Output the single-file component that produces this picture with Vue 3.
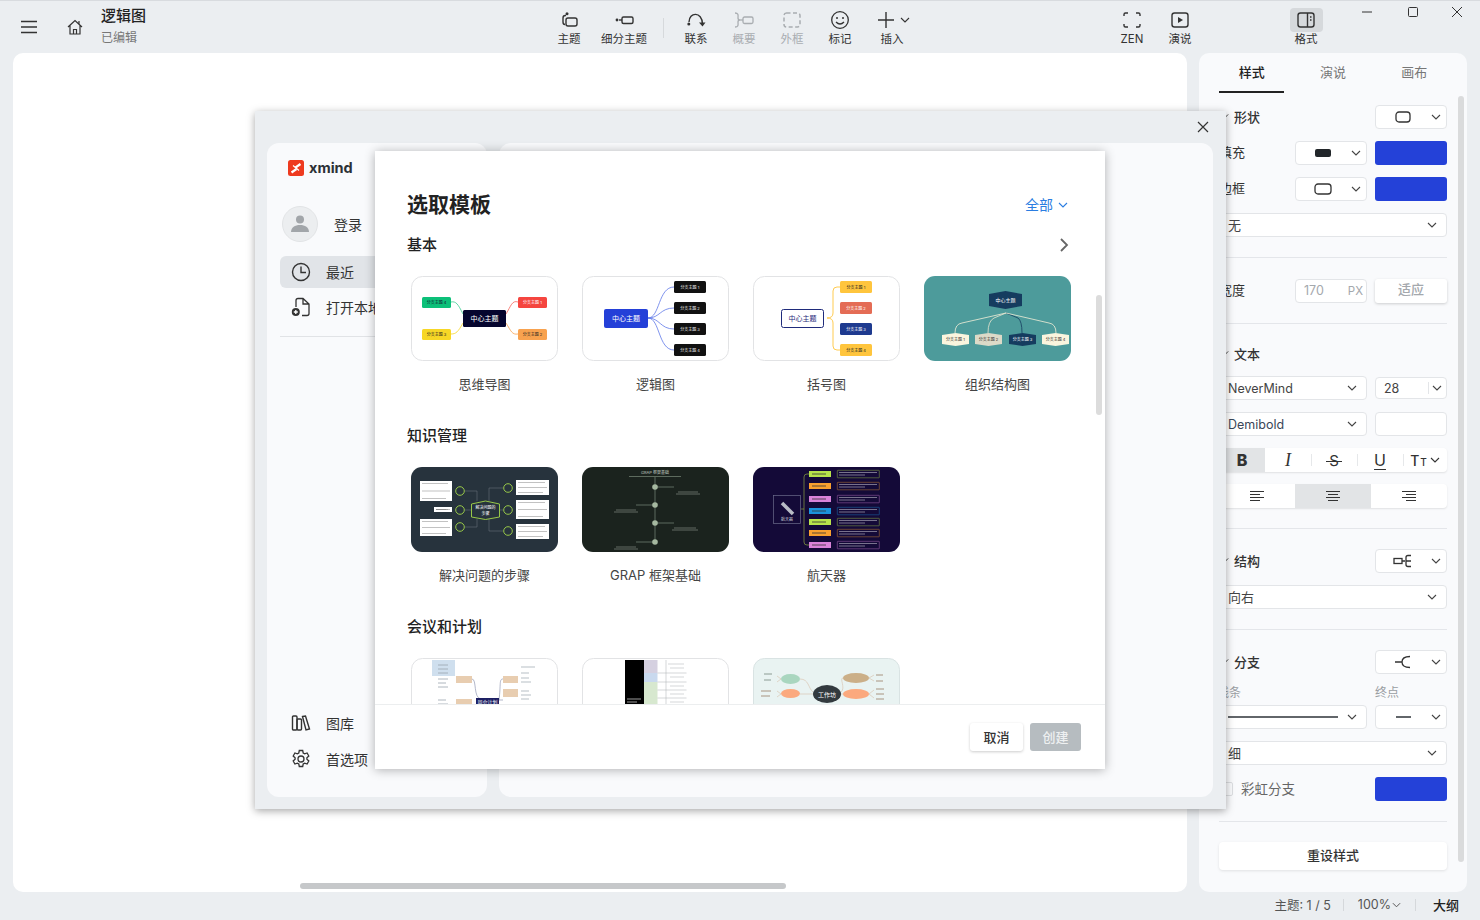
<script setup>
import { h } from 'vue'

// small chevron used by every dropdown
const Chev = () =>
  h('svg', { class: 'chev', width: 10, height: 6, viewBox: '0 0 10 6' }, [
    h('path', { d: 'M1 1l4 4 4-4', fill: 'none', stroke: 'currentColor', 'stroke-width': 1.1 })
  ])

const curves1 = [
  { d: 'M95 38C100 30 101 24 107 26', c: '#f5635c' },
  { d: 'M95 47C100 55 101 59 107 58', c: '#f8a24f' },
  { d: 'M52 38C47 28 45 25 40 26', c: '#3ccb92' },
  { d: 'M52 47C47 56 45 58 40 58', c: '#f7d726' }
]
const nodes1 = [
  { x: 107, y: 21, w: 29, h: 11, f: '#f5453f', t: '分支主题 1', c: '#fff' },
  { x: 107, y: 53, w: 29, h: 11, f: '#f8a24f', t: '分支主题 2', c: '#222' },
  { x: 11, y: 21, w: 29, h: 11, f: '#0cc079', t: '分支主题 4', c: '#123' },
  { x: 11, y: 53, w: 29, h: 11, f: '#f7d726', t: '分支主题 3', c: '#222' }
]
const rowY = [5, 26, 47, 68]
const braceColors = [
  { f: '#ffc53d', c: '#222' },
  { f: '#e46c55', c: '#fff' },
  { f: '#1e3a8f', c: '#fff' },
  { f: '#ffc53d', c: '#222' }
]
const orgKids = [
  { x: 18, f: '#faf5de', c: '#333', l: '#f2efd8', d: 'M82 37L38 47Q31 48 31 57', t: '分支主题 1' },
  { x: 51, f: '#dcdac8', c: '#333', l: '#e8e6d0', d: 'M82 37L70 42Q64 45 64 57', t: '分支主题 2' },
  { x: 85, f: '#153c5f', c: '#fff', l: '#153c5f', d: 'M82 37L94 42Q98 45 98 57', t: '分支主题 3' },
  { x: 118, f: '#faf5de', c: '#333', l: '#f2efd8', d: 'M82 37L125 47Q132 48 132 57', t: '分支主题 4' }
]
const problemBoxes = [
  [9, 14, 32, 20], [23, 40, 18, 5], [9, 52, 32, 17],
  [105, 13, 33, 15], [105, 33, 33, 19], [105, 57, 33, 15]
]
const problemDots = [[49, 24], [49, 43], [49, 60], [97, 21], [97, 43], [97, 64]]
const problemLines = [
  'M54 24H66V34', 'M54 43H60', 'M54 60H66V52',
  'M92 21H78V34', 'M92 43H89', 'M92 64H78V52'
]
const grapRows = [
  { y: 20, x2: 92, tx: 96, w: 20 },
  { y: 38, x2: 54, tx: 34, w: 20 },
  { y: 56, x2: 92, tx: 92, w: 22 },
  { y: 75, x2: 54, tx: 34, w: 20 }
]
const rocket = [
  { y: 4, c: '#b7e34b' }, { y: 16, c: '#f8a02f' }, { y: 29, c: '#d983d9' },
  { y: 41, c: '#1b93dc' }, { y: 52, c: '#b7e34b' }, { y: 63, c: '#f8a02f' }, { y: 75, c: '#d983d9' }
]
</script>

<template>
  <div class="app">
    <header class="topbar">
      <button class="icon-btn menu">
        <svg width="16" height="14" viewBox="0 0 16 14"><path d="M0 1.500h16M0 7h16M0 12.500h16" stroke="#333" stroke-width="1.700" /></svg>
      </button>
      <button class="icon-btn home">
        <svg width="18" height="18" viewBox="0 0 18 18" fill="none" stroke="#333" stroke-width="1.200"><path d="M2 9l7-6.500L16 9M4 7.500V16h10V7.500M7.500 16v-4.500h3V16M13 3v3" /></svg>
      </button>
      <div class="doc">
        <div class="doc-title">逻辑图</div>
        <div class="doc-sub">已编辑</div>
      </div>

      <div class="tool w48">
        <svg width="20" height="20" viewBox="0 0 20 20" fill="none" stroke="#333" stroke-width="1.400"><circle cx="8" cy="3.800" r="1.500" fill="#333" stroke="none" /><path d="M7 5.500H6.200Q4 5.500 4 8v4q0 2.500 2 2.500" /><rect x="7" y="8" width="11" height="8" rx="2" /></svg>
        <span>主题</span>
      </div>
      <div class="tool w62">
        <svg width="20" height="20" viewBox="0 0 20 20" fill="none" stroke="#333" stroke-width="1.400"><circle cx="3" cy="10" r="1.400" fill="#333" stroke="none" /><path d="M5 10h3" /><rect x="8" y="7" width="11" height="6.500" rx="1.500" /></svg>
        <span>细分主题</span>
      </div>
      <div class="tool-sep"></div>
      <div class="tool w48 ml1">
        <svg width="20" height="20" viewBox="0 0 20 20" fill="none" stroke="#333" stroke-width="1.400"><circle cx="2.800" cy="14" r="1.500" fill="#333" stroke="none" /><path d="M3 12C3 2 16 1 16.500 14" /><path d="M13 12.500l3.500 4 3-4z" fill="#333" stroke="none" /></svg>
        <span>联系</span>
      </div>
      <div class="tool w48 off">
        <svg width="20" height="20" viewBox="0 0 20 20" fill="none" stroke="#a9adb1" stroke-width="1.300"><path d="M1 3c4 0 3 3 3 5s1 2 2 2c-1 0-2 0-2 2s1 5-3 5" /><path d="M6 10h3" /><rect x="9" y="7" width="10" height="6.500" rx="1.500" /></svg>
        <span>概要</span>
      </div>
      <div class="tool w48 off">
        <svg width="20" height="20" viewBox="0 0 20 20" fill="none" stroke="#a9adb1" stroke-width="1.500"><rect x="2" y="3" width="16" height="14" rx="2.500" stroke-dasharray="4 2.500" /></svg>
        <span>外框</span>
      </div>
      <div class="tool w48">
        <svg width="20" height="20" viewBox="0 0 20 20" fill="none" stroke="#333" stroke-width="1.300"><circle cx="10" cy="10" r="8.300" /><circle cx="7" cy="8" r="1" fill="#333" stroke="none" /><circle cx="13" cy="8" r="1" fill="#333" stroke="none" /><path d="M6 12q4 4 8 0" /></svg>
        <span>标记</span>
      </div>
      <div class="tool w48 ml2">
        <div class="plus">
          <svg width="18" height="18" viewBox="0 0 18 18"><path d="M9 1v16M1 9h16" stroke="#333" stroke-width="1.400" /></svg>
          <Chev />
        </div>
        <span>插入</span>
      </div>
      <div class="tool w48 ml3">
        <svg width="20" height="20" viewBox="0 0 20 20" fill="none" stroke="#333" stroke-width="1.400"><path d="M2 6V4.500Q2 3 3.500 3H6M14 3h2.500Q18 3 18 4.500V6M18 14v1.500Q18 17 16.500 17H14M6 17H3.500Q2 17 2 15.500V14" /></svg>
        <span>ZEN</span>
      </div>
      <div class="tool w48">
        <svg width="20" height="20" viewBox="0 0 20 20" fill="none" stroke="#333" stroke-width="1.400"><rect x="2" y="3" width="16" height="14" rx="2.500" /><path d="M8 7l5 3-5 3z" fill="#333" stroke="none" /></svg>
        <span>演说</span>
      </div>
      <div class="tool w48 ml4 active">
        <div class="active-bg">
          <svg width="20" height="18" viewBox="0 0 20 18" fill="none" stroke="#333" stroke-width="1.400"><rect x="2" y="2" width="16" height="14" rx="2.500" /><path d="M11.500 2v14" /><path d="M14 6h1.500M14 9h1.500" /></svg>
        </div>
        <span>格式</span>
      </div>

      <div class="win">
        <svg class="win-min" width="12" height="12" viewBox="0 0 12 12"><path d="M1 6h10" stroke="#333" /></svg>
        <svg class="win-max" width="12" height="12" viewBox="0 0 12 12"><rect x="1.500" y="1.500" width="9" height="9" rx="1" fill="none" stroke="#333" /></svg>
        <svg class="win-close" width="12" height="12" viewBox="0 0 12 12"><path d="M1 1l10 10M11 1L1 11" stroke="#333" /></svg>
      </div>
    </header>

    <main class="body">
      <section class="canvas">
        <div class="hscroll"></div>
      </section>

      <aside class="panel">
        <div class="tabs">
          <div class="tab on">样式</div>
          <div class="tab">演说</div>
          <div class="tab">画布</div>
        </div>
        <div class="vscroll"></div>

        <div class="row head mt12">
          <span class="lbl"><Chev />形状</span>
          <div class="sel w72">
            <svg width="16" height="12" viewBox="0 0 16 12"><rect x="1" y="1" width="14" height="10" rx="3" fill="none" stroke="#333" stroke-width="1.300" /></svg>
            <Chev />
          </div>
        </div>
        <div class="row mt12">
          <span class="lbl2">填充</span>
          <div class="sel w72 mla">
            <svg width="18" height="10" viewBox="0 0 18 10"><rect x="1" y="1" width="16" height="8" rx="2" fill="#22262a" /></svg>
            <Chev />
          </div>
          <div class="swatch"></div>
        </div>
        <div class="row mt12">
          <span class="lbl2">边框</span>
          <div class="sel w72 mla">
            <svg width="18" height="12" viewBox="0 0 18 12"><rect x="1" y="1" width="16" height="10" rx="3" fill="none" stroke="#333" stroke-width="1.300" /></svg>
            <Chev />
          </div>
          <div class="swatch"></div>
        </div>
        <div class="sel full mt12"><span>无</span><Chev /></div>
        <div class="divider d1"></div>
        <div class="row">
          <span class="lbl2">宽度</span>
          <div class="sel w72 mla px"><em>170</em><i>PX</i></div>
          <div class="fit">适应</div>
        </div>
        <div class="divider d2"></div>

        <div class="row head mt19">
          <span class="lbl"><Chev />文本</span>
        </div>
        <div class="row mt12b">
          <div class="sel grow"><span>NeverMind</span><Chev /></div>
          <div class="sel w72 size"><span>28</span><b></b><Chev /></div>
        </div>
        <div class="row mt12">
          <div class="sel grow"><span class="blue">Demibold</span><Chev /></div>
          <div class="sel w72"></div>
        </div>
        <div class="seg mt12">
          <div class="seg-i seg-on bold">B</div>
          <div class="seg-i ital">I</div>
          <div class="seg-i strike"><span>S</span></div>
          <div class="seg-i under">U</div>
          <div class="seg-i tt">T<small>T</small><Chev /></div>
        </div>
        <div class="seg mt12">
          <div class="seg-a">
            <svg width="16" height="12" viewBox="0 0 16 12"><path d="M1 1.500h14M1 4.500h10M1 7.500h14M1 10.500h10" stroke="#333" /></svg>
          </div>
          <div class="seg-a seg-on">
            <svg width="16" height="12" viewBox="0 0 16 12"><path d="M1 1.500h14M3 4.500h10M1 7.500h14M3 10.500h10" stroke="#333" /></svg>
          </div>
          <div class="seg-a">
            <svg width="16" height="12" viewBox="0 0 16 12"><path d="M1 1.500h14M5 4.500h10M1 7.500h14M5 10.500h10" stroke="#333" /></svg>
          </div>
        </div>
        <div class="divider d3"></div>

        <div class="row head">
          <span class="lbl"><Chev />结构</span>
          <div class="sel w72">
            <svg width="20" height="14" viewBox="0 0 20 14" fill="none" stroke="#333" stroke-width="1.300"><rect x="1" y="4.500" width="8" height="5" /><path d="M9 7h3M18 1.500h-3q-2 0-2 2v7q0 2 2 2h3M13 7h5" /></svg>
            <Chev />
          </div>
        </div>
        <div class="sel full mt12"><span>向右</span><Chev /></div>
        <div class="divider d4"></div>

        <div class="row head">
          <span class="lbl"><Chev />分支</span>
          <div class="sel w72">
            <svg width="18" height="14" viewBox="0 0 18 14" fill="none" stroke="#333" stroke-width="1.300"><path d="M1 7h7M16 1.500q-8 0-8 5.500t8 5.500" /></svg>
            <Chev />
          </div>
        </div>
        <div class="row mt11 sub">
          <span class="sub-start">线条</span>
          <span class="sub-end">终点</span>
        </div>
        <div class="row mt4">
          <div class="sel grow line"><u></u><Chev /></div>
          <div class="sel w72"><u class="short"></u><Chev /></div>
        </div>
        <div class="sel full mt12"><span>细</span><Chev /></div>
        <div class="row mt12">
          <span class="check"></span>
          <span class="rainbow">彩虹分支</span>
          <div class="swatch mla"></div>
        </div>
        <div class="divider d5"></div>
        <div class="reset">重设样式</div>
      </aside>
    </main>

    <footer class="status">
      <span>主题: 1 / 5</span>
      <i></i>
      <span class="zoom">100%<Chev /></span>
      <i></i>
      <span class="outline">大纲</span>
    </footer>

    <!-- welcome window that lies over the editor -->
    <div class="welcome">
      <svg class="welcome-x" width="12" height="12" viewBox="0 0 12 12"><path d="M1 1l10 10M11 1L1 11" stroke="#333" stroke-width="1.200" /></svg>
      <nav class="side">
        <div class="brand">
          <svg width="16" height="16" viewBox="0 0 16 16"><rect width="16" height="16" rx="2.500" fill="#ee3a1f" /><path d="M7.500 7.500L12.500 4M3.500 12.500L8.500 9" fill="none" stroke="#fff" stroke-width="2.200" /><path d="M5 5.500l6 5" fill="none" stroke="#fff" stroke-width="1.200" /></svg>
          <span>xmind</span>
        </div>
        <div class="login">
          <div class="avatar">
            <svg width="20" height="20" viewBox="0 0 20 20" fill="#a2a6aa"><circle cx="10" cy="5.500" r="4" /><path d="M1 18c0-4.500 4-7 9-7s9 2.500 9 7z" /></svg>
          </div>
          <span>登录</span>
        </div>
        <div class="nav-i nav-on">
          <svg width="20" height="20" viewBox="0 0 20 20" fill="none" stroke="#333" stroke-width="1.400"><circle cx="10" cy="10" r="8.500" /><path d="M10 4.500V10.500H15" /></svg>
          <span>最近</span>
        </div>
        <div class="nav-i">
          <svg width="20" height="20" viewBox="0 0 20 20" fill="none" stroke="#333" stroke-width="1.300"><path d="M5 10V3.500Q5 1.500 7 1.500h5l6 5.500v9.500q0 2-2 2h-5M12 1.500V7h6" /><circle cx="4.800" cy="15" r="4" fill="#333" stroke="none" /><path d="M2.800 15h4M4.800 13v4" stroke="#fff" /></svg>
          <span>打开本地文件</span>
        </div>
        <div class="side-line"></div>
        <div class="nav-i lib">
          <svg width="20" height="20" viewBox="0 0 20 20" fill="none" stroke="#333" stroke-width="1.400"><rect x="1.500" y="3" width="4.500" height="14" rx="1" /><rect x="6" y="6" width="4.500" height="11" rx="1" /><path d="M11.500 3.500l3-.5 4 13-3.500 1z" /></svg>
          <span>图库</span>
        </div>
        <div class="nav-i pref">
          <svg width="20" height="20" viewBox="0 0 20 20" fill="none" stroke="#333" stroke-width="1.300"><circle cx="10" cy="10" r="3" /><path d="M8.300 1.500h3.400l.5 2.500 1.500.8 2.400-.8 1.700 3-1.900 1.700v1.600l1.900 1.700-1.700 3-2.400-.8-1.500.8-.5 2.500H8.300l-.5-2.500-1.500-.8-2.400.8-1.700-3 1.900-1.700V8.700L2.200 7l1.700-3 2.400.8 1.500-.8z" /></svg>
          <span>首选项</span>
        </div>
      </nav>
      <div class="welcome-main"></div>
    </div>

    <!-- template picker on top of that window -->
    <div class="modal">
      <div class="modal-scroll">
        <div class="modal-head">
          <h1>选取模板</h1>
          <span class="all">全部<Chev /></span>
        </div>

        <div class="sec-head">
          <h2>基本</h2>
          <svg width="10" height="14" viewBox="0 0 10 14"><path d="M2 1l6 6-6 6" fill="none" stroke="#666" stroke-width="1.800" /></svg>
        </div>
        <div class="thumbs">
          <figure>
            <svg class="thumb" viewBox="0 0 147 85">
              <rect x=".5" y=".5" width="146" height="84" rx="11" fill="#fff" stroke="#e2e3e5" />
              <path v-for="c in curves1" :key="c.d" :d="c.d" fill="none" :stroke="c.c" stroke-width=".8" />
              <rect x="52" y="34" width="43" height="17" rx="1.500" fill="#05052e" />
              <text x="73.500" y="45" class="tt7" fill="#fff">中心主题</text>
              <g v-for="n in nodes1" :key="n.t">
                <rect :x="n.x" :y="n.y" :width="n.w" :height="n.h" rx="1.500" :fill="n.f" />
                <text :x="n.x + n.w / 2" :y="n.y + 7.300" class="tt4" :fill="n.c">{{ n.t }}</text>
              </g>
            </svg>
            <figcaption>思维导图</figcaption>
          </figure>
          <figure>
            <svg class="thumb" viewBox="0 0 147 85">
              <rect x=".5" y=".5" width="146" height="84" rx="11" fill="#fff" stroke="#e2e3e5" />
              <path d="M66 42C78 42 76 11 92 11M66 42C78 42 78 32 92 32M66 42C78 42 78 53 92 53M66 42C78 42 76 74 92 74" fill="none" stroke="#5f78e8" stroke-width=".8" />
              <rect x="22" y="33" width="44" height="19" rx="2" fill="#2440d8" />
              <text x="44" y="45" class="tt7" fill="#fff">中心主题</text>
              <g v-for="(y, i) in rowY" :key="y">
                <rect x="92" :y="y" width="32" height="12" rx="1.500" fill="#111" />
                <text x="108" :y="y + 7.800" class="tt4" fill="#eee">分支主题 {{ i + 1 }}</text>
              </g>
            </svg>
            <figcaption>逻辑图</figcaption>
          </figure>
          <figure>
            <svg class="thumb" viewBox="0 0 147 85">
              <rect x=".5" y=".5" width="146" height="84" rx="11" fill="#fff" stroke="#e2e3e5" />
              <path d="M87 11h-3q-4 0-4 4v22q0 5-6 5 6 0 6 5v23q0 4 4 4h3" fill="none" stroke="#ffc53d" stroke-width=".9" />
              <rect x="28.500" y="33.500" width="42" height="18" rx="2" fill="#fff" stroke="#1f2b7b" stroke-width="1" />
              <text x="49.500" y="45" class="tt7" fill="#1f2b7b">中心主题</text>
              <g v-for="(y, i) in rowY" :key="y">
                <rect x="87" :y="y" width="32" height="12" rx="1.500" :fill="braceColors[i].f" />
                <text x="103" :y="y + 7.800" class="tt4" :fill="braceColors[i].c">分支主题 {{ i + 1 }}</text>
              </g>
            </svg>
            <figcaption>括号图</figcaption>
          </figure>
          <figure>
            <svg class="thumb" viewBox="0 0 147 85">
              <rect width="147" height="85" rx="11" fill="#4d9b9b" />
              <path v-for="k in orgKids" :key="k.x" :d="k.d" fill="none" :stroke="k.l" stroke-width=".8" />
              <path d="M65 18l16.500-3L98 18v12l-16.500 3L65 30z" fill="#153c5f" />
              <text x="81.500" y="26" class="tt5" fill="#fff">中心主题</text>
              <g v-for="k in orgKids" :key="k.t">
                <path :d="`M${k.x} 59l13.500-2 13.500 2v9l-13.500 2-13.500-2z`" :fill="k.f" />
                <text :x="k.x + 13.500" y="65" class="tt4" :fill="k.c">{{ k.t }}</text>
              </g>
            </svg>
            <figcaption>组织结构图</figcaption>
          </figure>
        </div>

        <div class="sec-head">
          <h2>知识管理</h2>
        </div>
        <div class="thumbs">
          <figure>
            <svg class="thumb" viewBox="0 0 147 85">
              <rect width="147" height="85" rx="11" fill="#27333d" />
              <path v-for="p in problemLines" :key="p" :d="p" fill="none" stroke="#66717a" stroke-width=".6" />
              <rect v-for="b in problemBoxes" :key="b[0] + '-' + b[1]" :x="b[0]" :y="b[1]" :width="b[2]" :height="b[3]" fill="#fff" />
              <g v-for="b in problemBoxes" :key="'l' + b[0] + b[1]">
                <path :d="`M${b[0] + 2} ${b[1] + 2.500}h${b[2] - 6}M${b[0] + 2} ${b[1] + b[3] / 2}h${b[2] - 4}M${b[0] + 2} ${b[1] + b[3] - 2.500}h${b[2] - 8}`" stroke="#777" stroke-width=".45" />
              </g>
              <circle v-for="d in problemDots" :key="d.join()" :cx="d[0]" :cy="d[1]" r="4.300" fill="#27333d" stroke="#a4d84a" stroke-width=".9" />
              <path d="M60.500 37l14-3 14 3v13l-14 2.500-14-2.500z" fill="#27333d" stroke="#a4d84a" stroke-width=".9" />
              <text x="74.500" y="42" class="tt4" fill="#fff">解决问题的</text>
              <text x="74.500" y="48" class="tt4" fill="#fff">步骤</text>
            </svg>
            <figcaption>解决问题的步骤</figcaption>
          </figure>
          <figure>
            <svg class="thumb" viewBox="0 0 147 85">
              <rect width="147" height="85" rx="11" fill="#1b231e" />
              <text x="73" y="7" class="tt4" fill="#c3cdc0">GRAP 框架基础</text>
              <path d="M47 9.500h52M73 10v66" stroke="#8c9c8a" stroke-width=".6" />
              <g v-for="r in grapRows" :key="r.y">
                <path :d="`M73 ${r.y}H${r.x2}`" stroke="#8c9c8a" stroke-width=".6" />
                <circle cx="73" :cy="r.y" r="2.800" fill="#a5b8a0" />
                <path :d="`M${r.tx} ${r.y + 5}h${r.w}M${r.tx - 2} ${r.y + 7}h${r.w + 4}`" stroke="#cfd6cc" stroke-width=".4" />
              </g>
            </svg>
            <figcaption>GRAP 框架基础</figcaption>
          </figure>
          <figure>
            <svg class="thumb" viewBox="0 0 147 85">
              <rect width="147" height="85" rx="11" fill="#140a38" />
              <rect x="20.500" y="28.500" width="27" height="28" fill="none" stroke="#6b6b8c" stroke-width=".7" />
              <path d="M29 36l11 11" stroke="#b9bcc6" stroke-width="3.500" />
              <text x="34" y="54" class="tt4" fill="#d3d3de">航天器</text>
              <path d="M48 42h3M56 7h-2q-3 0-3 3v26M51 36v6M51 42v33q0 3 3 3h2" fill="none" stroke="#89a23f" stroke-width=".7" />
              <g v-for="r in rocket" :key="r.y">
                <rect x="56" :y="r.y" width="22" height="6" :fill="r.c" />
                <path :d="`M59 ${r.y + 3}h14`" stroke="#333" stroke-width=".8" />
                <rect x="84.300" :y="r.y - .7" width="42" height="7.500" rx=".5" fill="none" :stroke="r.c" stroke-width=".5" opacity=".75" />
                <path :d="`M86 ${r.y + 1.500}h38M86 ${r.y + 4}h26`" stroke="#bcb9c8" stroke-width=".6" />
              </g>
            </svg>
            <figcaption>航天器</figcaption>
          </figure>
        </div>

        <div class="sec-head">
          <h2>会议和计划</h2>
        </div>
        <div class="thumbs">
          <figure>
            <svg class="thumb" viewBox="0 0 147 85">
              <rect x=".5" y=".5" width="146" height="84" rx="11" fill="#fff" stroke="#e2e3e5" />
              <rect x="21" y="2" width="23" height="16" fill="#cfdfee" />
              <path d="M27 7h10M27 11h10M27 15h10M27 21h10M27 25h8M27 29h10M27 42h8M27 46h10" stroke="#9aa3ad" stroke-width=".8" />
              <path d="M61 21C66 21 62 40 70 41M88 42C90 26 88 21 92 21M88 42h4" fill="none" stroke="#7f88a6" stroke-width=".6" />
              <rect x="45" y="18" width="16" height="7" fill="#e8cdb0" />
              <rect x="45" y="41" width="16" height="10" fill="#e8cdb0" />
              <rect x="65" y="40" width="23" height="12" fill="#1d1f63" />
              <text x="76.500" y="45.500" class="tt5" fill="#fff">周会计划</text>
              <rect x="92" y="18" width="15" height="7" fill="#e8cdb0" />
              <rect x="92" y="31" width="15" height="8" fill="#e8cdb0" />
              <path d="M110 9h14M110 15h8M110 20h8M110 24h10M110 33h8M110 37h10M110 41h8" stroke="#9aa3ad" stroke-width=".7" />
            </svg>
          </figure>
          <figure>
            <svg class="thumb" viewBox="0 0 147 85">
              <rect x=".5" y=".5" width="146" height="84" rx="11" fill="#fff" stroke="#e2e3e5" />
              <rect x="43" y="2" width="19" height="60" fill="#000" />
              <path d="M45 41h14M45 44h10" stroke="#ddd" stroke-width=".7" />
              <rect x="62" y="2" width="13.500" height="13" fill="#d5d0e0" />
              <rect x="62" y="15" width="13.500" height="9" fill="#c9d9ee" />
              <rect x="62" y="24" width="13.500" height="30" fill="#d7e8cf" />
              <path d="M75.500 15h29M75.500 24h29M75.500 32h29M75.500 40h29M84 2v44M86 6h16M88 10h14M88 19h14M88 28h14M88 36h14M88 44h14" stroke="#a8adb3" stroke-width=".5" />
            </svg>
          </figure>
          <figure>
            <svg class="thumb" viewBox="0 0 147 85">
              <rect x=".5" y=".5" width="146" height="84" rx="11" fill="#e9f3f2" stroke="#d9e3e3" />
              <path d="M47 21C56 21 55 30 60 34M47 36h13M88 34C93 30 86 20 90 20M88 36h2M116 20l5-3M116 20l5 3M116 36l5-4M116 36l5 4M28 21l-4-3M28 21l-4 3M28 36l-4-3M28 36l-4 3" fill="none" stroke="#d7bfa9" stroke-width=".6" />
              <path d="M11 16h8M11 22h7" stroke="#8c9c94" stroke-width="1" />
              <path d="M8 33h10M8 38h9M123 17h7M123 23h7M123 31h8M123 36h8M123 41h8" stroke="#a89480" stroke-width="1" />
              <ellipse cx="37.500" cy="21" rx="9.500" ry="5" fill="#a9d6bf" />
              <ellipse cx="37.500" cy="35.500" rx="9.500" ry="4.500" fill="#fba97e" />
              <ellipse cx="74" cy="36" rx="14" ry="9" fill="#333a3f" />
              <text x="74" y="38.500" class="tt6" fill="#fff">工作坊</text>
              <ellipse cx="103" cy="20" rx="13" ry="5" fill="#cbaf88" />
              <ellipse cx="103" cy="36" rx="13" ry="5" fill="#fba97e" />
            </svg>
          </figure>
        </div>
      </div>
      <div class="modal-bar"></div>
      <div class="modal-foot">
        <button class="btn">取消</button>
        <button class="btn btn-off">创建</button>
      </div>
    </div>
  </div>
</template>

<style>
html, body {
  margin: 0;
  background: #ebeef1;
}
</style>

<style scoped>
.app {
  position: relative;
  width: 1480px;
  height: 920px;
  display: flex;
  flex-direction: column;
  overflow: hidden;
  background: #ebeef1;
  border-top: 1px solid #d8dbdf;
  box-sizing: border-box;
  font-family: Inter, "Noto Sans CJK SC", sans-serif;
  color: #333;
}

/* toolbar */
.topbar {
  height: 52px;
  display: flex;
  align-items: flex-start;
  flex-shrink: 0;
  position: relative;
}
.icon-btn {
  border: 0;
  background: none;
  padding: 0;
  display: flex;
}
.menu { margin: 19px 0 0 21px; }
.home { margin: 17px 0 0 29px; }
.doc { margin-left: 17px; width: 444px; }
.doc-title { font-size: 15px; font-weight: 500; line-height: 20px; margin-top: 5px; color: #222; }
.doc-sub { font-size: 12px; line-height: 18px; margin-top: 3px; color: #777; }
.tool {
  display: flex;
  flex-direction: column;
  align-items: center;
  padding-top: 9px;
  font-size: 11.500px;
  line-height: 16px;
  color: #333;
  height: 43px;
  flex-shrink: 0;
}
.tool > svg { height: 20px; }
.tool span { margin-top: 1px; }
.w48 { width: 48px; }
.w62 { width: 62px; margin-left: 0; }
.off { color: #a9adb1; }
.ml1 { margin-left: 8px; }
.ml2 { margin-left: 4px; }
.ml3 { margin-left: 192px; }
.ml4 { margin-left: 78px; }
.tool-sep { width: 1px; height: 20px; margin: 17px 0 0 8px; background: #d6d9dc; }
.plus { display: flex; align-items: center; gap: 5px; height: 20px; margin-left: 3px; }
.plus .chev { color: #333; }
.active { padding-top: 7px; }
.active-bg {
  width: 33px;
  height: 24px;
  border-radius: 4px;
  background: #d6d9dc;
  display: flex;
  align-items: center;
  justify-content: center;
}
.active span { margin-top: -1px; }
.win { flex: 1; display: flex; margin-top: 5px; }
.win-min { margin-left: 31px; }
.win-max { margin-left: 34px; }
.win-close { margin-left: 32px; }

/* main area */
.body {
  flex: 1;
  min-height: 0;
  display: flex;
  padding: 0 13px;
  gap: 12px;
}
.canvas {
  width: 1174px;
  background: #fff;
  border-radius: 10px;
  position: relative;
}
.hscroll {
  position: absolute;
  left: 287px;
  bottom: 3px;
  width: 486px;
  height: 6px;
  border-radius: 3px;
  background: #c6c8ca;
}
.panel {
  position: relative;
  width: 268px;
  box-sizing: border-box;
  padding: 0 20px;
  background: #f9fafc;
  border-radius: 10px;
  font-size: 13px;
}
.vscroll {
  position: absolute;
  right: 3px;
  top: 43px;
  width: 6px;
  height: 766px;
  border-radius: 3px;
  background: #dadbdc;
}
.tabs { display: flex; gap: 16px; height: 40px; }
.tab {
  flex: 1;
  text-align: center;
  line-height: 38px;
  color: #777;
  font-size: 13px;
  box-sizing: border-box;
}
.tab.on { color: #222; font-weight: 500; border-bottom: 2px solid #222; }
.row { display: flex; align-items: center; gap: 8px; height: 24px; }
.head { justify-content: space-between; }
.lbl {
  display: flex;
  align-items: center;
  gap: 5px;
  font-weight: 500;
  color: #333;
  margin: 0 0 2px 2px;
}
.lbl .chev { width: 8px; color: #333; }
.lbl2 { color: #333; margin-bottom: 4px; }
.mla { margin-left: auto; }
.mt12 { margin-top: 12px; }
.mt19 { margin-top: 18px; }
.mt12b { margin-top: 10px; }
.mt11 { margin-top: 7px; height: 20px; }
.mt4 { margin-top: 4px; }
.sel {
  height: 24px;
  box-sizing: border-box;
  background: #fff;
  border: 1px solid #e3e5e8;
  border-radius: 4px;
  display: flex;
  align-items: center;
  position: relative;
  flex-shrink: 0;
  color: #444;
  font-size: 12.500px;
}
.sel .chev { position: absolute; right: 5px; top: 8px; color: #444; }
.w72 { width: 72px; justify-content: center; padding-right: 16px; }
.full { width: 228px; padding-left: 8px; font-size: 13px; }
.full span { margin-bottom: 2px; }
.full .chev { right: 9px; }
.grow { flex: 1; padding-left: 8px; }
.grow .chev { right: 9px; }
.blue { color: #3a4658; }
.swatch { width: 72px; height: 24px; border-radius: 3px; background: #2441d8; flex-shrink: 0; }
.divider { height: 1px; background: #e4e6ea; }
.d1 { margin: 20px 0 21px; }
.d2 { margin-top: 20px; }
.d3 { margin: 20px 0 20px; }
.d4 { margin: 20px 0 20px; }
.d5 { margin: 20px 0 20px; }
.px { justify-content: flex-start; padding: 0 0 0 8px; }
.px em { font-style: normal; color: #a4a8ad; font-size: 12.500px; margin-bottom: 1px; }
.px i { font-style: normal; color: #a4a8ad; font-size: 11.500px; position: absolute; right: 3px; }
.fit {
  width: 72px;
  height: 24px;
  line-height: 21px;
  text-align: center;
  background: #fff;
  color: #a4a8ad;
  font-weight: 500;
  border-radius: 3px;
  box-shadow: 0 1px 3px rgba(0, 0, 0, .18);
}
.size { height: 22px; justify-content: flex-start; padding: 0 0 0 8px; }
.size b { position: absolute; right: 17px; top: 4px; width: 1px; height: 12px; background: #e3e5e8; }
.size .chev { top: 7px; right: 4px; }
.seg {
  height: 24px;
  background: #fff;
  border-radius: 4px;
  display: flex;
  align-items: stretch;
  box-shadow: 0 1px 2px rgba(0, 0, 0, .1);
}
.seg-i {
  flex: 1;
  display: flex;
  align-items: center;
  justify-content: center;
  font-size: 15px;
  color: #333;
  position: relative;
}
.seg-i + .seg-i + .seg-i::before {
  content: "";
  position: absolute;
  left: 0;
  top: 6px;
  width: 1px;
  height: 12px;
  background: #e6e8ea;
}
.seg-a { flex: 1; display: flex; align-items: center; justify-content: center; }
.seg-on { background: #e2e4e6; }
.bold { font-weight: 800; font-size: 16px; flex: 0 0 46px; }
.ital { font-style: italic; font-family: "Liberation Serif", serif; font-size: 18px; flex: 0 0 46px; }
.strike { flex: 0 0 46px; }
.strike span { position: relative; }
.strike span::after {
  content: "";
  position: absolute;
  left: -3px;
  right: -3px;
  top: 10px;
  height: 1px;
  background: #333;
}
.under { text-decoration: underline; text-underline-offset: 3px; font-size: 16px; flex: 0 0 46px; }
.tt { font-size: 14px; font-weight: 500; gap: 1px; }
.tt small { font-size: 10px; margin-top: 3px; }
.tt .chev { margin-left: 2px; position: static; }
.line u { display: block; width: 110px; height: 1.500px; background: #62666a; }
.short { display: block; width: 15px; height: 2px; background: #62666a; }
.sub { color: #9a9ea3; font-size: 12px; }
.sub-start { margin-left: -2px; }
.sub-end { margin-left: auto; width: 72px; }
.check {
  width: 12px;
  height: 12px;
  border: 1px solid #dcdee1;
  border-radius: 2px;
  flex-shrink: 0;
}
.rainbow { color: #666; font-size: 13.500px; margin-bottom: 2px; }
.reset {
  height: 28px;
  line-height: 26px;
  text-align: center;
  background: #fff;
  border-radius: 4px;
  color: #333;
  font-weight: 500;
  box-shadow: 0 1px 3px rgba(0, 0, 0, .1);
}

/* status bar */
.status {
  height: 28px;
  flex-shrink: 0;
  box-sizing: border-box;
  display: flex;
  align-items: center;
  justify-content: flex-end;
  padding: 0 21px 3px 0;
  font-size: 12.500px;
  color: #555;
}
.status i { width: 1px; height: 12px; background: #d5d8db; margin: 0 12px; }
.zoom { display: flex; align-items: center; gap: 1px; margin: 0 2px; }
.zoom .chev { width: 9px; }
.outline { color: #222; font-weight: 500; font-size: 13px; margin-left: 5px; }

/* welcome window */
.welcome {
  position: absolute;
  left: 255px;
  top: 110px;
  width: 971px;
  height: 698px;
  box-sizing: border-box;
  padding: 32px 13px 12px 12px;
  display: flex;
  gap: 12px;
  background: #ebeef1;
  box-shadow: 0 2px 8px rgba(0, 0, 0, .35);
}
.welcome-x { position: absolute; right: 17px; top: 10px; }
.side {
  width: 220px;
  flex-shrink: 0;
  box-sizing: border-box;
  padding: 17px 13px 0;
  background: #f9fafc;
  border-radius: 12px;
  display: flex;
  flex-direction: column;
  font-size: 14px;
  color: #333;
  overflow: hidden;
}
.welcome-main { flex: 1; background: #f9fafc; border-radius: 12px; }
.brand { display: flex; align-items: center; gap: 5px; margin-left: 8px; height: 16px; }
.brand span { font-size: 14.500px; font-weight: 700; color: #2c3035; line-height: 16px; }
.login { display: flex; align-items: center; gap: 16px; margin: 30px 0 0 2px; }
.avatar {
  width: 36px;
  height: 36px;
  border-radius: 50%;
  box-sizing: border-box;
  background: #eceef0;
  border: 1px solid #e2e4e6;
  display: flex;
  align-items: center;
  justify-content: center;
}
.login span { font-size: 14px; }
.nav-i {
  height: 32px;
  flex-shrink: 0;
  display: flex;
  align-items: center;
  gap: 15px;
  padding-left: 11px;
  white-space: nowrap;
}
.nav-on { margin-top: 14px; background: #e1e4e8; border-radius: 6px; }
.nav-on + .nav-i { margin-top: 3px; }
.side-line { height: 1px; background: #e1e3e6; margin-top: 13px; flex-shrink: 0; }
.lib { margin-top: auto; }
.pref { margin: 4px 0 22px; }

/* template modal */
.modal {
  position: absolute;
  left: 375px;
  top: 150px;
  width: 730px;
  height: 618px;
  background: #fff;
  display: flex;
  flex-direction: column;
  box-shadow: 0 1px 10px rgba(0, 0, 0, .3);
}
.modal-scroll {
  height: 553px;
  flex-shrink: 0;
  overflow: hidden;
  padding: 0 35px 0 32px;
  box-sizing: border-box;
}
.modal-head {
  height: 84px;
  box-sizing: border-box;
  padding-top: 39px;
  display: flex;
  justify-content: space-between;
  align-items: flex-start;
}
.modal-head h1 { margin: 0; font-size: 21px; line-height: 30px; font-weight: 600; color: #222; }
.all {
  display: flex;
  align-items: center;
  gap: 5px;
  font-size: 14px;
  line-height: 30px;
  color: #2a7de1;
  margin-right: 2px;
}
.sec-head { height: 20px; display: flex; justify-content: space-between; align-items: center; }
.sec-head h2 { margin: 0; font-size: 15px; line-height: 20px; font-weight: 500; color: #222; }
.sec-head svg { margin-right: 1px; }
.thumbs {
  display: grid;
  grid-template-columns: repeat(4, 147px);
  gap: 24px;
  margin: 21px 0 31px 4px;
}
figure { margin: 0; width: 147px; }
.thumb { display: block; width: 147px; height: 85px; }
figcaption {
  margin-top: 13px;
  height: 21px;
  line-height: 21px;
  text-align: center;
  font-size: 13px;
  color: #444;
}
.tt7 { font-size: 7px; text-anchor: middle; }
.tt6 { font-size: 6px; text-anchor: middle; }
.tt5 { font-size: 5px; text-anchor: middle; }
.tt4 { font-size: 4px; text-anchor: middle; }
.modal-bar {
  position: absolute;
  left: 721px;
  top: 144px;
  width: 6px;
  height: 120px;
  border-radius: 3px;
  background: #dcdcdc;
}
.modal-foot {
  flex: 1;
  border-top: 1px solid #eceeef;
  display: flex;
  justify-content: flex-end;
  align-items: center;
  gap: 7px;
  padding: 0 24px 0 0;
}
.btn {
  width: 53px;
  height: 28px;
  border: 0;
  border-radius: 3px;
  padding: 0 0 2px;
  background: #fff;
  color: #333;
  font: 500 13px Inter, "Noto Sans CJK SC", sans-serif;
  box-shadow: 0 1px 3px rgba(0, 0, 0, .2);
}
.btn-off { width: 51px; background: #b6bcc0; color: #eef0f1; box-shadow: none; }
</style>
